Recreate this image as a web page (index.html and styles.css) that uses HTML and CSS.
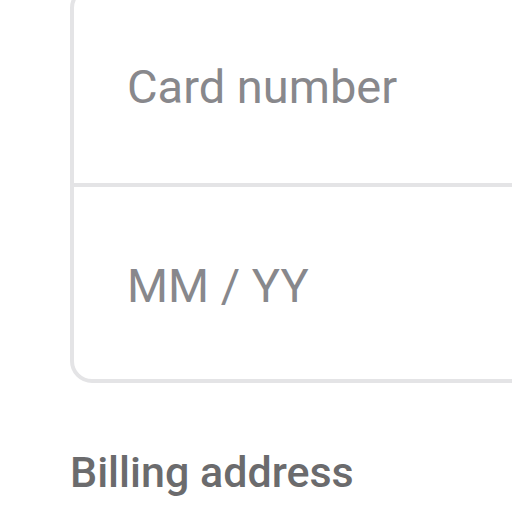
FILE: index.html
```html
<!DOCTYPE html>
<html>
<head>
<meta charset="utf-8">
<link rel="stylesheet" href="styles.css">
</head>
<body>
<div class="page">
  <div class="card-box">
    <div class="field">Card number</div>
    <div class="field field-last">MM / YY</div>
  </div>
  <h2 class="section-title">Billing address</h2>
</div>
</body>
</html>
```
FILE: styles.css
```css
html, body {
  margin: 0;
  padding: 0;
  background: #ffffff;
  overflow: hidden;
}
.page {
  width: 512px;
  height: 512px;
  overflow: hidden;
  padding-left: 70px;
  box-sizing: border-box;
  font-family: Roboto, "Liberation Sans", sans-serif;
}
.card-box {
  margin-top: -14px;
  width: 600px;
  border: 4px solid #e4e4e6;
  border-radius: 22px;
  box-sizing: border-box;
}
.field {
  height: 197px;
  display: flex;
  align-items: center;
  padding-left: 53px;
  font-size: 47px;
  color: #88888c;
  border-bottom: 4px solid #e4e4e6;
  box-sizing: border-box;
}
.field-last {
  height: 192px;
  padding-top: 4px;
  border-bottom: none;
}
.section-title {
  margin: 64px 0 0 0;
  font-size: 43px;
  font-weight: 500;
  color: #6b6b6d;
  line-height: 1.2;
}
```
